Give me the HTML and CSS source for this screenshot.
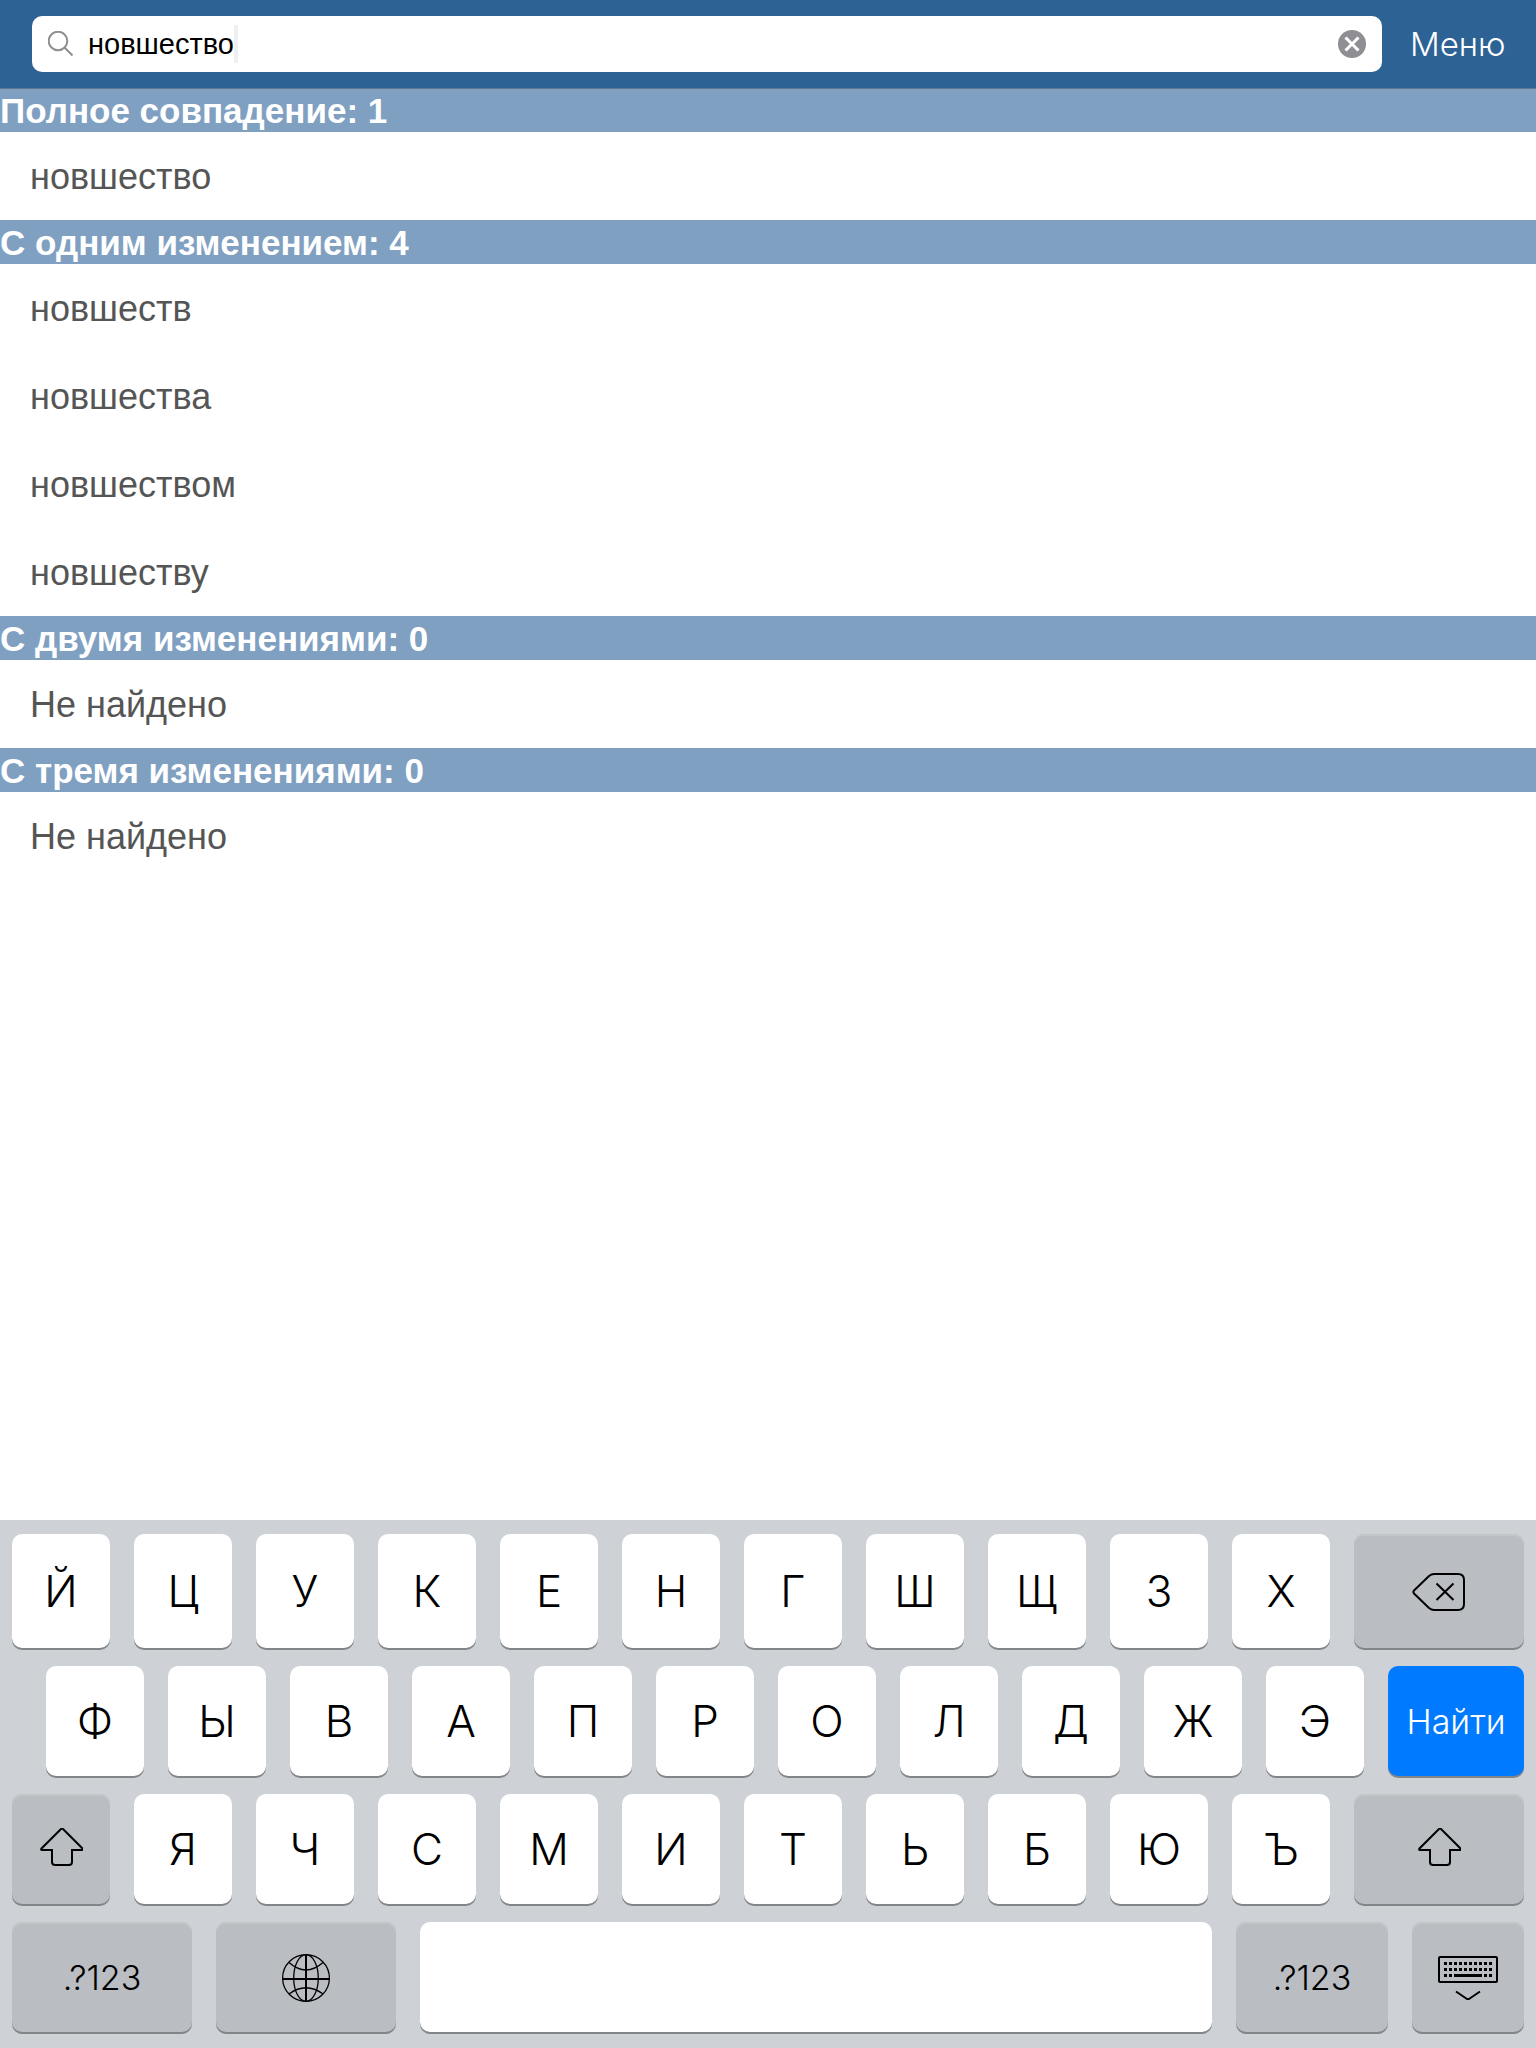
FILE: index.html
```html
<!DOCTYPE html>
<html lang="ru">
<head>
<meta charset="utf-8">
<meta name="viewport" content="width=device-width, initial-scale=1">
<title>Поиск слов</title>
<link rel="stylesheet" href="styles.css">
</head>
<body>
<svg class="symbols" aria-hidden="true">
  <symbol id="shift" viewBox="-1 1 44 44">
    <path d="M21 2Q22 1 23 2L42.500 21.500Q43.500 23 42 23H32V35Q32 38 29 38H15Q12 38 12 35V23H2Q.5 23 1.500 21.500Z"/>
  </symbol>
</svg>

<header class="topbar">
  <form class="search" role="search">
    <svg class="search-icon" viewBox="0 0 26 26" aria-hidden="true"><circle cx="10" cy="10" r="9.300"/><path d="M16.500 16.500L24.500 24.500"/></svg>
    <input class="search-input" type="text" aria-label="Поиск" value="новшество">
    <span class="caret"></span>
    <button class="clear" type="button" aria-label="Очистить">
      <svg viewBox="0 0 28 28" aria-hidden="true"><circle cx="14" cy="14" r="14"/><path d="M7.500 7.500L20.500 20.500M20.500 7.500L7.500 20.500"/></svg>
    </button>
  </form>
  <button class="menu" type="button">Меню</button>
</header>

<main class="results">
  <section>
    <h2>Полное совпадение: 1</h2>
    <ul><li>новшество</li></ul>
  </section>
  <section>
    <h2>С одним изменением: 4</h2>
    <ul><li>новшеств</li><li>новшества</li><li>новшеством</li><li>новшеству</li></ul>
  </section>
  <section>
    <h2>С двумя изменениями: 0</h2>
    <ul><li>Не найдено</li></ul>
  </section>
  <section>
    <h2>С тремя изменениями: 0</h2>
    <ul><li>Не найдено</li></ul>
  </section>
</main>

<div class="keyboard">
  <div class="row row-first">
    <button class="key">Й</button><button class="key">Ц</button><button class="key">У</button><button class="key">К</button><button class="key">Е</button><button class="key">Н</button><button class="key">Г</button><button class="key">Ш</button><button class="key">Щ</button><button class="key">З</button><button class="key">Х</button>
    <button class="key fn wide" aria-label="Удалить">
      <svg class="icon-delete" viewBox="0 0 54 40" aria-hidden="true"><path d="M2 18.500L17 4Q19.500 2 22 2H46Q52 2 52 8V32Q52 38 46 38H22Q19.500 38 17 36L2 21.500Q.8 20 2 18.500Z"/><path d="M24.500 11.500L41.500 28M41.500 11.500L24.500 28"/></svg>
    </button>
  </div>
  <div class="row row-indent">
    <button class="key">Ф</button><button class="key">Ы</button><button class="key">В</button><button class="key">А</button><button class="key">П</button><button class="key">Р</button><button class="key">О</button><button class="key">Л</button><button class="key">Д</button><button class="key">Ж</button><button class="key">Э</button>
    <button class="key go">Найти</button>
  </div>
  <div class="row">
    <button class="key fn" aria-label="Верхний регистр"><svg class="icon-shift" aria-hidden="true"><use href="#shift"/></svg></button>
    <button class="key">Я</button><button class="key">Ч</button><button class="key">С</button><button class="key">М</button><button class="key">И</button><button class="key">Т</button><button class="key">Ь</button><button class="key">Б</button><button class="key">Ю</button><button class="key">Ъ</button>
    <button class="key fn wide" aria-label="Верхний регистр"><svg class="icon-shift" aria-hidden="true"><use href="#shift"/></svg></button>
  </div>
  <div class="row">
    <button class="key fn mode-left">.?123</button>
    <button class="key fn mode-left" aria-label="Сменить язык">
      <svg class="icon-globe" viewBox="0 0 50 50" aria-hidden="true"><circle cx="25" cy="25" r="23.400"/><ellipse cx="25" cy="25" rx="12.300" ry="23.400"/><path d="M8 9.500Q25 24.500 42 9.500M8 41Q25 28.500 42 41"/><path class="axis" d="M25 1.500V48.500M1.500 26H48.500"/></svg>
    </button>
    <button class="key space" aria-label="Пробел"></button>
    <button class="key fn mode-right">.?123</button>
    <button class="key fn hide" aria-label="Скрыть клавиатуру">
      <svg class="icon-hide" viewBox="0 0 60 44" aria-hidden="true"><rect x="1" y="1" width="58" height="25" rx="1"/><path class="dots" d="M6 7.500H56M6 13.500H56"/><path class="dots" d="M6 19.500H16M46 19.500H56"/><path class="bar" d="M16 19.500H44"/><path d="M18 35.500L29 43Q30 43.500 31 43L42 35.500"/></svg>
    </button>
  </div>
</div>
</body>
</html>
```
FILE: styles.css
```css
* { box-sizing: border-box; }

body {
  display: flex;
  flex-direction: column;
  min-height: 100vh;
  margin: 0;
  background: #fff;
  font-family: "Liberation Sans", Arial, sans-serif;
}

button, input {
  margin: 0;
  padding: 0;
  border: 0;
  background: none;
  color: inherit;
  font: inherit;
}

svg { display: block; fill: none; stroke: #000; stroke-width: 2; }
.symbols { position: absolute; width: 0; height: 0; }

.topbar {
  display: flex;
  align-items: center;
  gap: 28px;
  padding: 16px 32px;
  background: #2d6294;
}

.search {
  display: flex;
  flex: 1;
  align-items: center;
  height: 56px;
  padding: 0 16px;
  border-radius: 10px;
  background: #fff;
}
.search-icon { width: 26px; height: 26px; margin-right: 14px; stroke: #8e8e93; }
.search-input {
  field-sizing: content;
  height: 56px;
  outline: 0;
  color: #000;
  font-size: 29px;
}
.caret { width: 4px; height: 38px; background: #efefef; }
.clear { margin-left: auto; }
.clear svg { width: 28px; height: 28px; stroke: none; fill: #8e8e93; }
.clear path { stroke: #fff; stroke-width: 3; }

.menu {
  width: 94px;
  color: #fff;
  font-family: Inter, sans-serif;
  font-size: 33px;
  font-weight: 300;
}

.results { flex: 1; }
.results section:first-child h2 { box-shadow: inset 0 1px #5c7691; }
.results h2 {
  margin: 0;
  padding-top: 2px;
  background: #80a0c2;
  color: #fff;
  font-size: 35px;
  font-weight: 700;
  line-height: 42px;
}
.results ul { margin: 0; padding: 0; list-style: none; }
.results li {
  padding: 2px 0 0 30px;
  color: #555;
  font-size: 36px;
  line-height: 86px;
}

.keyboard {
  display: flex;
  flex-direction: column;
  gap: 18px;
  padding: 14px 12px 16px;
  background: #ced2d6;
}
.row { display: flex; gap: 24px; height: 110px; }
.row-first { height: 114px; }
.row-indent { padding-left: 34px; }

.key {
  display: flex;
  flex: 98 1 0;
  align-items: center;
  justify-content: center;
  min-width: 0;
  border-radius: 10px;
  background: #fff;
  box-shadow: 0 2px #848589;
  color: #000;
  font-family: Inter, sans-serif;
  font-size: 44px;
  font-weight: 300;
}
.fn {
  background: #babdc1;
  box-shadow: 0 2px #848589, inset 0 2px #c3c5c9;
  font-size: 34px;
}
.fn svg { margin-top: 2px; }
.wide { flex-grow: 170; }
.go { flex-grow: 136; background: #007aff; color: #fff; font-size: 34px; }
.mode-left { flex-grow: 180; }
.space { flex-grow: 792; }
.mode-right { flex-grow: 152; }
.hide { flex-grow: 112; }

.icon-delete { width: 54px; height: 40px; }
.icon-shift { width: 44px; height: 44px; }
.icon-globe { width: 50px; height: 50px; stroke-width: 1.300; }
.icon-globe .axis { stroke-width: 2; }
.icon-hide { width: 60px; height: 44px; }
.icon-hide .dots { stroke-width: 3; stroke-dasharray: 3 2; }
.icon-hide .bar { stroke-width: 3; }
```
